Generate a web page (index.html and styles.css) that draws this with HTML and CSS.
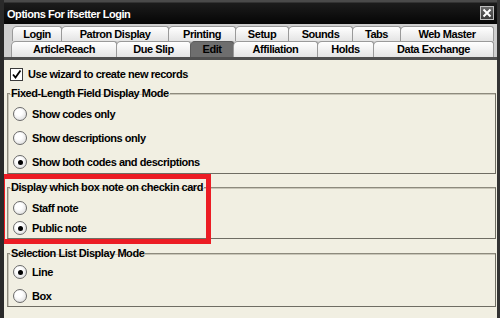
FILE: index.html
```html
<!DOCTYPE html>
<html lang="en">
<head>
    <meta charset="UTF-8">
    <title>Options For ifsetter Login</title>
    <link rel="stylesheet" href="styles.css">
</head>
<body>
    <div class="window">
        <div class="titlebar">
            <span class="title">Options For ifsetter Login</span>
            <span class="close">
                <svg width="10" height="10" viewBox="0 0 10 10"><path d="M1.5 1.5L8.5 8.5M8.5 1.5L1.5 8.5" stroke="#fff" stroke-width="2"/></svg>
            </span>
        </div>

        <div class="tabstrip">
            <div class="tabrow first">
                <div class="tab t-login">Login</div>
                <div class="tab t-patron">Patron Display</div>
                <div class="tab t-printing">Printing</div>
                <div class="tab t-setup">Setup</div>
                <div class="tab t-sounds">Sounds</div>
                <div class="tab t-tabs">Tabs</div>
                <div class="tab t-web">Web Master</div>
            </div>
            <div class="tabrow second">
                <div class="tab t-article">ArticleReach</div>
                <div class="tab t-due">Due Slip</div>
                <div class="tab t-edit selected">Edit</div>
                <div class="tab t-affil">Affiliation</div>
                <div class="tab t-holds">Holds</div>
                <div class="tab t-data">Data Exchange</div>
            </div>
        </div>

        <div class="panel">
            <div class="check-row">
                <span class="checkbox">
                    <svg width="11" height="11" viewBox="0 0 11 11"><path d="M2 5.5L4.5 8.5L9.5 1.5" fill="none" stroke="#000" stroke-width="1.8"/></svg>
                </span>
                <span>Use wizard to create new records</span>
            </div>

            <fieldset class="group g-fixed">
                <legend>Fixed-Length Field Display Mode</legend>
                <div class="opt"><span class="radio"></span>Show codes only</div>
                <div class="opt"><span class="radio"></span>Show descriptions only</div>
                <div class="opt"><span class="radio on"></span>Show both codes and descriptions</div>
            </fieldset>

            <fieldset class="group g-note">
                <legend>Display which box note on checkin card</legend>
                <div class="opt"><span class="radio"></span>Staff note</div>
                <div class="opt"><span class="radio on"></span>Public note</div>
            </fieldset>

            <fieldset class="group g-list">
                <legend>Selection List Display Mode</legend>
                <div class="opt"><span class="radio on"></span>Line</div>
                <div class="opt"><span class="radio"></span>Box</div>
            </fieldset>
        </div>

        <!-- red callout drawn over the screenshot -->
        <div class="highlight"></div>
    </div>
</body>
</html>
```

FILE: styles.css
```css
body {
    margin: 0;
    background: #2b2b2b;
    font-family: "Liberation Sans", Arial, sans-serif;
    font-size: 11px;
    font-weight: bold;
    letter-spacing: -0.45px;
}

.window {
    position: relative;
    width: 493px;
    height: 318px;
    border-left: 4px solid #2a2a2a;
    border-right: 3px solid #333;
    overflow: hidden;
}

/* title bar */
.titlebar {
    height: 24px;
    display: flex;
    align-items: center;
    justify-content: space-between;
    padding: 0 3px 0 3px;
    box-sizing: border-box;
    background: linear-gradient(#4a4a4a 0, #4a4a4a 2px, #1c1c1c 3px, #050505 100%);
    color: #fff;
}

.title {
    padding-top: 3px;
}

.close {
    width: 12px;
    height: 12px;
    margin-top: 2px;
    border: 1px solid #bdbdbd;
    background: linear-gradient(#6a6a6a, #3a3a3a);
    display: flex;
    align-items: center;
    justify-content: center;
}

/* tabs */
.tabstrip {
    background: #cfcfcf;
    padding-top: 2px;
    border-bottom: 3px solid #4f4f4f;
}

.tabrow {
    display: flex;
    height: 15px;
}

.tabrow.first {
    padding-left: 8px;
}

.tabrow.second {
    padding-left: 7px;
    height: 16px;
}

.tab {
    box-sizing: border-box;
    margin-right: -1px;
    border: 1px solid #9a9a9a;
    border-bottom: none;
    border-radius: 5px 3px 0 0;
    background: linear-gradient(#ffffff, #e4e4e4);
    color: #000;
    text-align: center;
    line-height: 15px;
}

.tab.selected {
    background: #6e6e6e;
    border-color: #5a5a5a;
}

.t-login { width: 50px; }
.t-patron { width: 108px; }
.t-printing { width: 68px; }
.t-setup { width: 54px; }
.t-sounds { width: 65px; }
.t-tabs { width: 49px; }
.t-web { width: 94px; }

.t-article { width: 106px; }
.t-due { width: 75px; }
.t-edit { width: 44px; }
.t-affil { width: 85px; }
.t-holds { width: 57px; }
.t-data { width: 121px; }

/* content */
.panel {
    background: #f1efe2;
    height: 258px;
    padding: 6px 1px 0 3px;
    box-sizing: border-box;
    color: #000;
}

.check-row {
    display: flex;
    align-items: center;
    gap: 5px;
    height: 16px;
    padding-left: 3px;
}

.checkbox {
    width: 11px;
    height: 11px;
    border: 1px solid #3a3a3a;
    background: #fff;
    display: flex;
    align-items: center;
    justify-content: center;
}

.group {
    margin: 5px 0 0 0;
    padding: 6px 0 2px 5px;
    min-width: 0;
    border: 1px solid #6f6d63;
    border-top-color: #8d8a7d;
    border-left-color: #8d8a7d;
    box-shadow: inset 1px 1px 0 #c9c6b8;
    display: flex;
    flex-direction: column;
}

.group legend {
    padding: 0 1px;
    margin-left: -3px;
    line-height: 12px;
}

.g-fixed {
    padding-top: 7px;
    padding-bottom: 3px;
    gap: 8px;
}

.g-note {
    margin-top: 7px;
    padding-top: 7px;
    gap: 4px;
}

.g-list {
    margin-top: 8px;
    padding-top: 5px;
    gap: 8px;
}

.opt {
    display: flex;
    align-items: center;
    gap: 5px;
    height: 16px;
}

.radio {
    width: 12px;
    height: 12px;
    border: 1px solid #6a6a6a;
    border-radius: 50%;
    background: radial-gradient(circle at 40% 35%, #ffffff 30%, #d4d4d4 100%);
    display: flex;
    align-items: center;
    justify-content: center;
}

.radio.on::after {
    content: "";
    width: 5px;
    height: 5px;
    border-radius: 50%;
    background: #000;
}

.highlight {
    position: absolute;
    left: -4px;
    top: 174px;
    width: 201px;
    height: 60px;
    border: 5px solid #ec1c24;
}
```
